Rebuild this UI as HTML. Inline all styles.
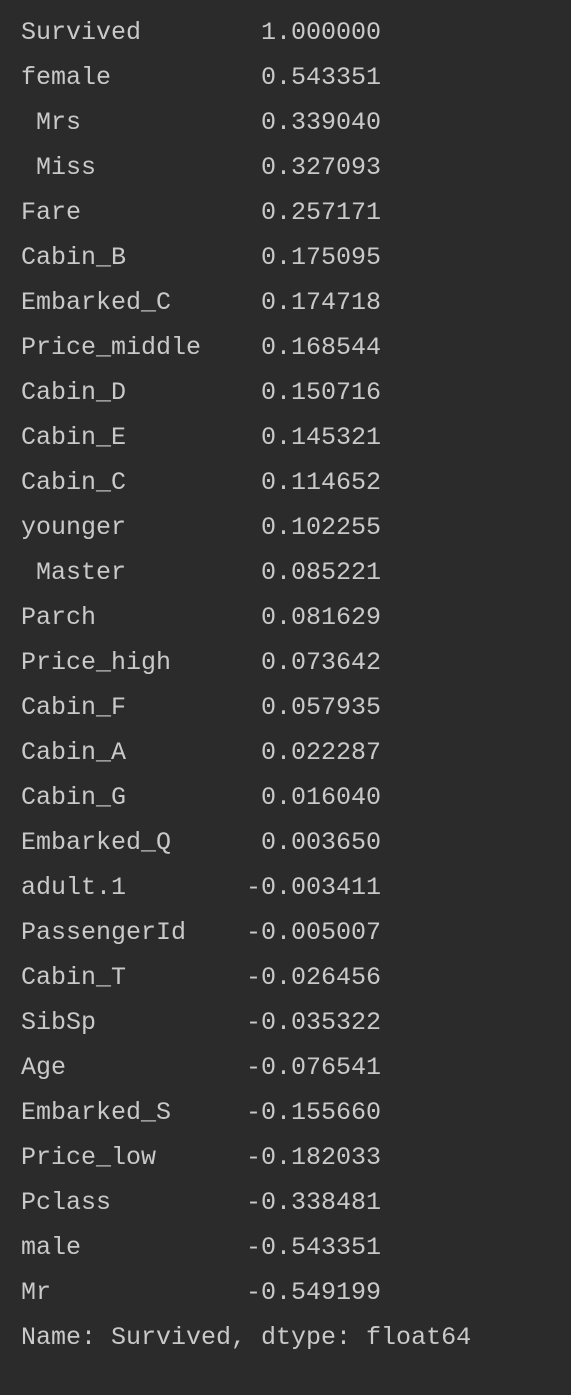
<!DOCTYPE html>
<html><head><meta charset="utf-8"><style>
html,body{margin:0;padding:0;background:#2b2b2b;width:571px;height:1395px;overflow:hidden}
pre{margin:0;padding:10px 0 0 21px;font-family:"Liberation Mono",monospace;font-size:25px;line-height:45px;color:#c9c9c9}
</style></head><body><pre>Survived        1.000000
female          0.543351
 Mrs            0.339040
 Miss           0.327093
Fare            0.257171
Cabin_B         0.175095
Embarked_C      0.174718
Price_middle    0.168544
Cabin_D         0.150716
Cabin_E         0.145321
Cabin_C         0.114652
younger         0.102255
 Master         0.085221
Parch           0.081629
Price_high      0.073642
Cabin_F         0.057935
Cabin_A         0.022287
Cabin_G         0.016040
Embarked_Q      0.003650
adult.1        -0.003411
PassengerId    -0.005007
Cabin_T        -0.026456
SibSp          -0.035322
Age            -0.076541
Embarked_S     -0.155660
Price_low      -0.182033
Pclass         -0.338481
male           -0.543351
Mr             -0.549199
Name: Survived, dtype: float64</pre></body></html>
